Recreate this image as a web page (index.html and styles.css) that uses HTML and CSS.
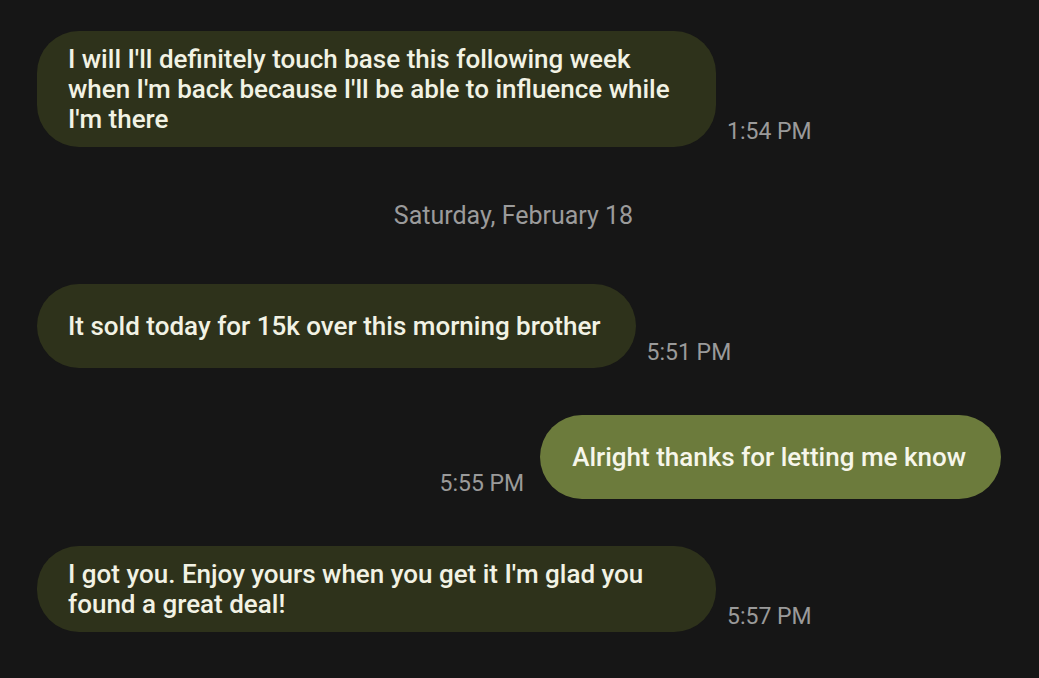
FILE: index.html
```html
<!DOCTYPE html>
<html>
<head>
<meta charset="utf-8">
<link rel="stylesheet" href="styles.css">
</head>
<body>
<div class="thread">
  <div class="row in">
    <div class="bubble">I will I'll definitely touch base this following week when I'm back because I'll be able to influence while I'm there</div>
    <div class="time">1:54 PM</div>
  </div>
  <div class="date">Saturday, February 18</div>
  <div class="row in">
    <div class="bubble">It sold today for 15k over this morning brother</div>
    <div class="time">5:51 PM</div>
  </div>
  <div class="row out">
    <div class="time">5:55 PM</div>
    <div class="bubble">Alright thanks for letting me know</div>
  </div>
  <div class="row in">
    <div class="bubble">I got you. Enjoy yours when you get it I'm glad you found a great deal!</div>
    <div class="time">5:57 PM</div>
  </div>
</div>
</body>
</html>
```
FILE: styles.css
```css
html, body {
  margin: 0;
  background: #161616;
  font-family: Roboto, "Liberation Sans", sans-serif;
}
.thread {
  display: flex;
  flex-direction: column;
  padding: 31px 38px 0 37px;
  gap: 47px;
}
.row {
  display: flex;
  align-items: flex-end;
  gap: 11px;
}
.row.out {
  justify-content: flex-end;
  gap: 16px;
}
.bubble {
  box-sizing: border-box;
  max-width: 679px;
  min-height: 84px;
  padding: 13px 35px 13px 31px;
  border-radius: 42px;
  display: flex;
  align-items: center;
  font-size: 26px;
  line-height: 30px;
  font-weight: 500;
  color: #f2f2e4;
  background: #2e321b;
}
.out .bubble {
  padding-left: 32px;
  background: #6c7b3c;
  color: #f6f6ea;
}
.time {
  font-size: 23px;
  line-height: 23px;
  color: #9a9a9a;
  margin-bottom: 4px;
  white-space: nowrap;
}
.date {
  text-align: center;
  font-size: 25px;
  line-height: 30px;
  color: #9b9b9b;
  margin: 7px 0 6px;
  padding-right: 11px;
}
```
